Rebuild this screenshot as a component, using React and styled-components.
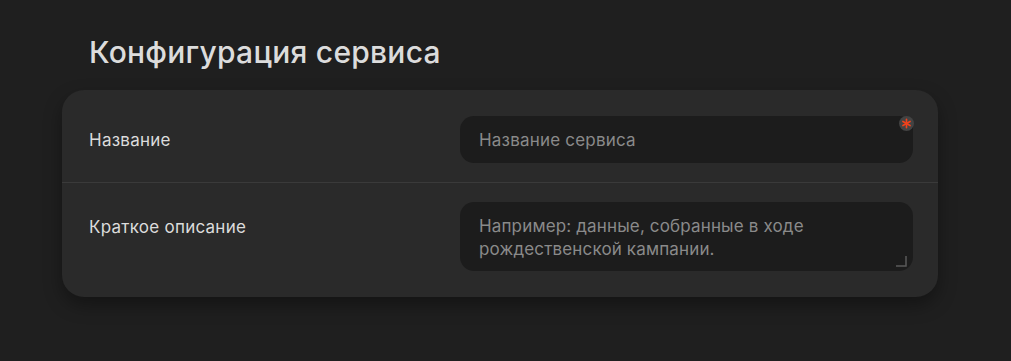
import React from "react";
import styled, { createGlobalStyle } from "styled-components";

const GlobalStyle = createGlobalStyle`
  html, body {
    margin: 0;
    padding: 0;
    background: #1f1f1f;
    font-family: Inter, "Noto Sans", sans-serif;
    -webkit-font-smoothing: antialiased;
  }
`;

const Page = styled.div`
  width: 1011px;
  height: 361px;
  box-sizing: border-box;
  padding: 30px 73px 0 62px;
  background: #1f1f1f;
`;

const Title = styled.h1`
  margin: 0 0 16px 27px;
  font-size: 30px;
  line-height: 44px;
  font-weight: 500;
  color: #dcdcdc;
  letter-spacing: 0.25px;
`;

const Card = styled.div`
  background: #2a2a2a;
  border-radius: 22px;
  padding: 7px 0;
  box-shadow: 0 8px 18px rgba(0, 0, 0, 0.35);
`;

const Row = styled.div`
  display: grid;
  grid-template-columns: 1fr 453px;
  align-items: ${(p) => (p.$top ? "start" : "center")};
  padding: 19px 25px 19px 27px;
  border-top: ${(p) => (p.$divider ? "1px solid #3a3a3a" : "none")};
`;

const Label = styled.label`
  font-size: 17px;
  color: #dcdcdc;
  padding-top: ${(p) => (p.$top ? "13px" : "0")};
  line-height: 24px;
  letter-spacing: 0.25px;
`;

const Field = styled.div`
  position: relative;
`;

const Input = styled.input`
  width: 100%;
  height: 47px;
  box-sizing: border-box;
  border: none;
  outline: none;
  border-radius: 14px;
  background: #1c1c1c;
  padding: 0 19px;
  font-family: inherit;
  font-size: 17px;
  letter-spacing: 0.2px;
  color: #dcdcdc;
  &::placeholder {
    color: #8a8a8a;
  }
`;

const TextArea = styled.textarea`
  display: block;
  width: 100%;
  height: 69px;
  box-sizing: border-box;
  border: none;
  outline: none;
  resize: none;
  border-radius: 14px;
  background: #1c1c1c;
  padding: 13px 19px 12px;
  font-family: inherit;
  font-size: 17px;
  line-height: 23px;
  letter-spacing: 0.15px;
  color: #dcdcdc;
  &::placeholder {
    color: #8a8a8a;
  }
`;

const Required = styled.span`
  position: absolute;
  top: 0;
  right: 0;
  width: 15px;
  height: 15px;
  border-radius: 50%;
  background: #434343;
  display: flex;
  align-items: center;
  justify-content: center;
  transform: translate(1px, 0);
`;

const Handle = styled.svg`
  position: absolute;
  right: 6px;
  bottom: 4px;
`;

export default function App() {
  return (
    <>
      <GlobalStyle />
      <Page>
        <Title>Конфигурация сервиса</Title>
        <Card>
          <Row>
            <Label>Название</Label>
            <Field>
              <Input placeholder="Название сервиса" />
              <Required>
                <svg width="11" height="11" viewBox="0 0 12 12">
                  <g stroke="#f0421c" strokeWidth="1.8" strokeLinecap="round">
                    <line x1="6" y1="1.5" x2="6" y2="10.5" />
                    <line x1="2.1" y1="3.75" x2="9.9" y2="8.25" />
                    <line x1="2.1" y1="8.25" x2="9.9" y2="3.75" />
                  </g>
                </svg>
              </Required>
            </Field>
          </Row>
          <Row $divider $top>
            <Label $top>Краткое описание</Label>
            <Field>
              <TextArea placeholder="Например: данные, собранные в ходе рождественской кампании." />
              <Handle width="11" height="11" viewBox="0 0 11 11">
                <path d="M10 0 V10 H0" fill="none" stroke="#5a5a5a" strokeWidth="1.5" />
              </Handle>
            </Field>
          </Row>
        </Card>
      </Page>
    </>
  );
}
